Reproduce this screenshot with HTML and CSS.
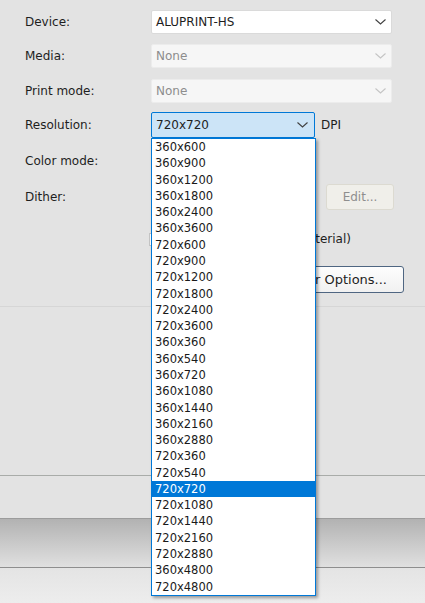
FILE: index.html
```html
<!DOCTYPE html>
<html lang="en">
<head>
    <meta charset="UTF-8">
    <meta name="viewport" content="width=device-width, initial-scale=1.0">
    <title>Printer Settings</title>
    <link rel="stylesheet" href="styles.css">
</head>
<body>
    <div class="dialog">
        <div class="form">
            <div class="row">
                <label class="label">Device:</label>
                <div class="combo combo-wide">
                    <span>ALUPRINT-HS</span>
                    <svg class="chevron" width="11" height="6" viewBox="0 0 11 6"><polyline points="0.5,0.5 5.5,5 10.5,0.5"/></svg>
                </div>
            </div>
            <div class="row">
                <label class="label">Media:</label>
                <div class="combo combo-wide combo-disabled">
                    <span>None</span>
                    <svg class="chevron" width="11" height="6" viewBox="0 0 11 6"><polyline points="0.5,0.5 5.5,5 10.5,0.5"/></svg>
                </div>
            </div>
            <div class="row row-print">
                <label class="label">Print mode:</label>
                <div class="combo combo-wide combo-disabled">
                    <span>None</span>
                    <svg class="chevron" width="11" height="6" viewBox="0 0 11 6"><polyline points="0.5,0.5 5.5,5 10.5,0.5"/></svg>
                </div>
            </div>
            <div class="row row-res">
                <label class="label">Resolution:</label>
                <div class="combo combo-res combo-focus">
                    <span>720x720</span>
                    <svg class="chevron" width="11" height="6" viewBox="0 0 11 6"><polyline points="0.5,0.5 5.5,5 10.5,0.5"/></svg>
                </div>
                <span class="unit">DPI</span>
            </div>
            <div class="row row-tall">
                <label class="label">Color mode:</label>
                <div class="combo combo-small"></div>
            </div>
            <div class="row row-tall">
                <label class="label">Dither:</label>
                <div class="combo combo-small"></div>
                <button class="btn btn-edit" disabled>Edit...</button>
            </div>
            <div class="row row-check">
                <span class="check"></span>
                <span class="check-text">Auto (from material)</span>
            </div>
            <div class="row row-options">
                <button class="btn btn-options">Printer Options...</button>
            </div>
        </div>

        <div class="divider"></div>
        <div class="spacer"></div>

        <div class="footer">
            <div class="footer-band"></div>
            <div class="footer-bar"></div>
            <div class="footer-base"></div>
        </div>

        <ul class="dropdown">
            <li>360x600</li>
            <li>360x900</li>
            <li>360x1200</li>
            <li>360x1800</li>
            <li>360x2400</li>
            <li>360x3600</li>
            <li>720x600</li>
            <li>720x900</li>
            <li>720x1200</li>
            <li>720x1800</li>
            <li>720x2400</li>
            <li>720x3600</li>
            <li>360x360</li>
            <li>360x540</li>
            <li>360x720</li>
            <li>360x1080</li>
            <li>360x1440</li>
            <li>360x2160</li>
            <li>360x2880</li>
            <li>720x360</li>
            <li>720x540</li>
            <li class="selected">720x720</li>
            <li>720x1080</li>
            <li>720x1440</li>
            <li>720x2160</li>
            <li>720x2880</li>
            <li>360x4800</li>
            <li>720x4800</li>
        </ul>
    </div>
</body>
</html>
```

FILE: styles.css
```css
body {
    margin: 0;
    background-color: #e3e3e3;
    font-family: "DejaVu Sans", Verdana, sans-serif;
    font-size: 12px;
    color: #1e1e1e;
    overflow: hidden;
}
.dialog {
    position: relative;
    width: 425px;
    height: 603px;
    display: flex;
    flex-direction: column;
}
.form {
    display: flex;
    flex-direction: column;
    gap: 10px;
    padding: 10px 0 0 25px;
}
.row {
    display: flex;
    align-items: center;
    height: 24px;
}
.row-print {
    margin-top: 1px;
}
.row-res {
    margin-top: -1px;
    height: 26px;
}
.row-tall {
    height: 26px;
}
.row-check {
    margin-top: 7px;
    width: 202px;
    margin-left: 124px;
    justify-content: space-between;
}
.row-options {
    margin-top: 5px;
    height: 27px;
}
.label {
    width: 126px;
    flex: none;
}
.combo {
    box-sizing: border-box;
    height: 100%;
    display: flex;
    align-items: center;
    justify-content: space-between;
    padding: 0 5px 1px 4px;
    background-color: #fff;
    border: 1px solid #dadada;
    border-radius: 2px;
}
.combo-wide {
    width: 241px;
}
.combo-disabled {
    background-color: #f6f6f6;
    border-color: #ececec;
    color: #8d8d8d;
}
.combo-disabled .chevron {
    stroke: #c4c4c4;
}
.combo-res {
    width: 164px;
    padding-right: 6px;
}
.combo-focus {
    background-color: #cce4f7;
    border-color: #0078d7;
}
.combo-small {
    width: 120px;
}
.chevron {
    fill: none;
    stroke: #404040;
    stroke-width: 1.1;
}
.unit {
    margin-left: 6px;
}
.btn {
    box-sizing: border-box;
    height: 100%;
    font-family: inherit;
    font-size: 12px;
    border-radius: 3px;
    padding: 0;
    white-space: nowrap;
}
.btn-edit {
    margin-left: 55px;
    width: 68px;
    background-color: #f0efea;
    border: 1px solid #dcdad1;
    color: #8e8e8e;
}
.btn-options {
    margin-left: 229px;
    width: 150px;
    padding-right: 16px;
    text-align: right;
    font-size: 13px;
    background: linear-gradient(#fdfdfd, #f1f1f1);
    border: 1px solid #4f6682;
    color: #1e1e1e;
}
.check {
    width: 13px;
    height: 13px;
    box-sizing: border-box;
    border: 1px solid #c4c4c4;
    background-color: #fff;
}
.divider {
    margin-top: 13px;
    height: 1px;
    background-color: #d6d6d6;
}
.spacer {
    flex: 1;
}
.footer-band {
    height: 42px;
    border-top: 1px solid #a9aca9;
    background-color: #e3e3e3;
}
.footer-bar {
    height: 48px;
    border-top: 1px solid #9c9c9c;
    border-bottom: 1px solid #8e8e8e;
    background: linear-gradient(#b2b2b2, #e0e0e0);
}
.footer-base {
    height: 35px;
    background: linear-gradient(#e4e4e4, #ededed);
}
.dropdown {
    position: absolute;
    left: 151px;
    top: 138px;
    width: 165px;
    box-sizing: border-box;
    margin: 0;
    padding: 0;
    list-style: none;
    background-color: #fff;
    border: 1px solid #0078d7;
    box-shadow: 2px 2px 3px rgba(0, 0, 0, 0.35);
    font-size: 11.5px;
}
.dropdown li {
    height: 16.29px;
    line-height: 16.29px;
    padding-left: 3px;
    color: #1a1a1a;
}
.dropdown .selected {
    background-color: #0078d7;
    color: #fff;
}
```
